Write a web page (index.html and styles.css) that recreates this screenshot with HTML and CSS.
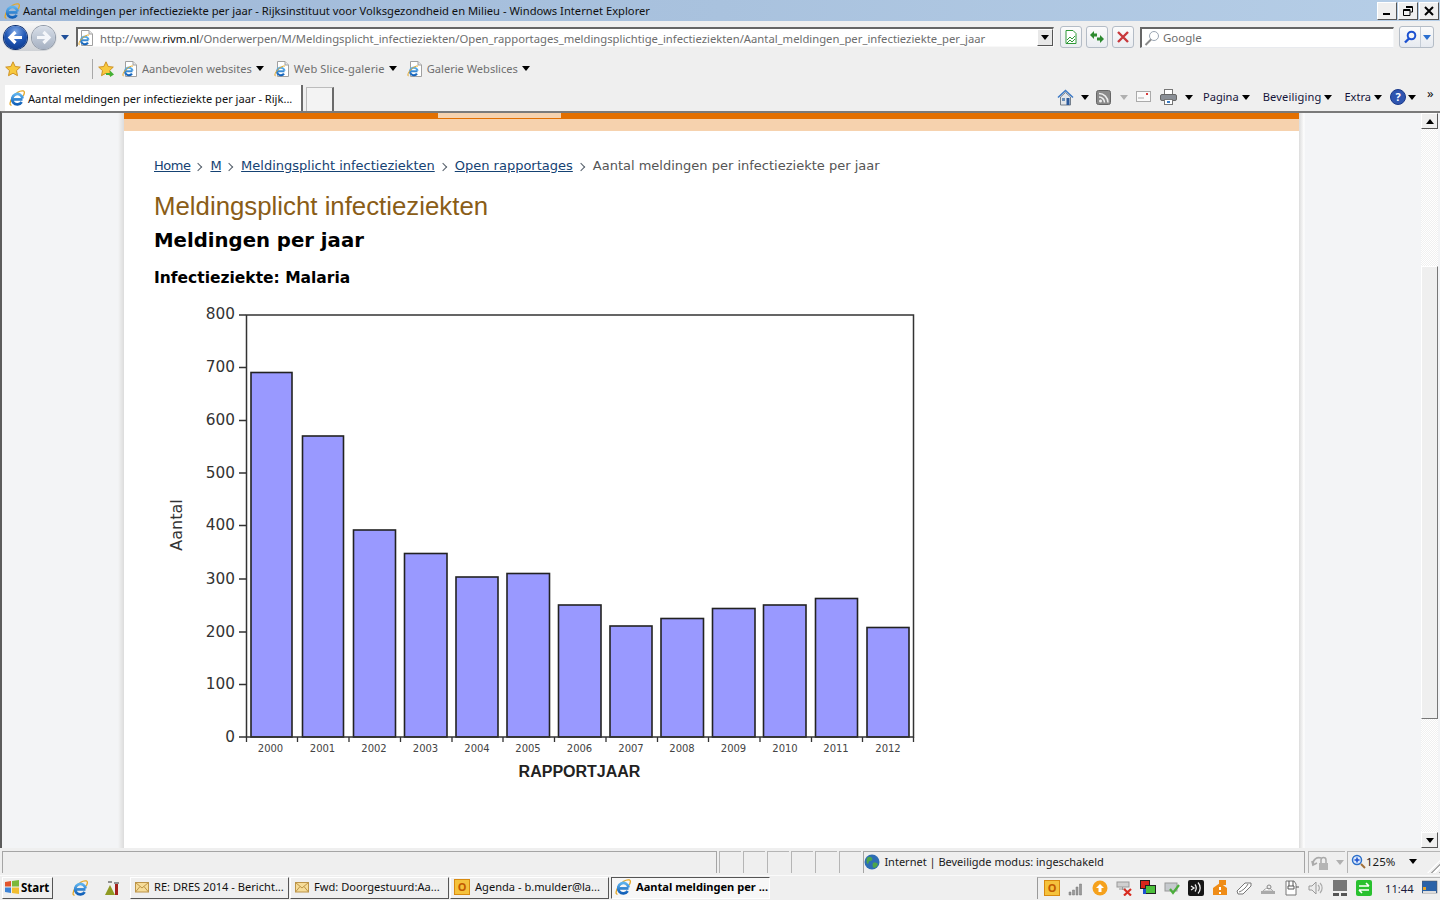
FILE: index.html
```html
<!DOCTYPE html>
<html lang="nl">
<head>
<meta charset="utf-8">
<title>Aantal meldingen per infectieziekte per jaar</title>
<link rel="stylesheet" href="styles.css">
</head>
<body>
<svg class="defs" width="0" height="0" aria-hidden="true">
  <defs>
    <linearGradient id="ieblue" x1="0" y1="0" x2="0" y2="1"><stop offset="0" stop-color="#5db2ee"/><stop offset="1" stop-color="#1260b8"/></linearGradient>
    <radialGradient id="backg" cx=".5" cy=".25" r=".8"><stop offset="0" stop-color="#7fa9e6"/><stop offset=".55" stop-color="#1f56b4"/><stop offset="1" stop-color="#0e3a8c"/></radialGradient>
  </defs>
  <symbol id="ie" viewBox="0 0 16 16">
    <path d="M2.600 15C.2 15.800.6 11.500 4 7S11.500.400 14.300.900c1.700.5 1.200 3-.3 5.300" fill="none" stroke="#e5a828" stroke-width="1.300"/>
    <path d="M4 9.300h9.500M12.700 12A5.200 5.200 0 1 1 13.500 8.500" fill="none" stroke="url(#ieblue)" stroke-width="2.700"/>
  </symbol>
  <symbol id="pageie" viewBox="0 0 16 16">
    <path d="M3.500.5h7.500l3.500 3.500v11.500h-11z" fill="#fff" stroke="#a0a0a0"/>
    <path d="M11 .5v3.500h3.500" fill="#e8e8e8" stroke="#a0a0a0"/>
    <path d="M3.500 10.300h7M10 12.600A3.800 3.800 0 1 1 10.600 9.800" fill="none" stroke="url(#ieblue)" stroke-width="2.100"/>
    <path d="M1.500 15C.2 15 1 11.500 3.500 9S9 4.500 11 5" fill="none" stroke="#e5a828" stroke-width="1"/>
  </symbol>
  <symbol id="star" viewBox="0 0 16 16">
    <path d="M8 .8l2.200 4.700 5.100.6-3.800 3.500 1 5.100L8 12.200l-4.500 2.500 1-5.100L.7 6.100l5.100-.6z" fill="#f8c93e" stroke="#c98a1a" stroke-width=".9"/>
  </symbol>
  <symbol id="env" viewBox="0 0 14 12">
    <rect x=".5" y="1.500" width="13" height="9.500" fill="#f6dc98" stroke="#bc9448"/>
    <path d="M.5 1.500L7 7l6.500-5.500M.5 11L5 5.500M13.500 11L9 5.500" fill="none" stroke="#bc9448"/>
  </symbol>
</svg>

<header class="titlebar">
  <svg class="i16"><use href="#ie"/></svg>
  <span class="title-text">Aantal meldingen per infectieziekte per jaar - Rijksinstituut voor Volksgezondheid en Milieu - Windows Internet Explorer</span>
  <div class="winbtns">
    <button class="winbtn"><svg width="12" height="12"><rect x="2" y="8" width="7" height="2" fill="#000"/></svg></button>
    <button class="winbtn"><svg width="12" height="12"><path d="M4 1.500h6.500v5.500h-2M1.500 4.500h6.500v6h-6.500zM1.500 5.500h6.500M4 2.500h6.500" fill="none" stroke="#000"/></svg></button>
    <button class="winbtn"><svg width="12" height="12"><path d="M2 2l8 8M10 2l-8 8" fill="none" stroke="#000" stroke-width="2"/></svg></button>
  </div>
</header>

<div class="addrrow">
  <div class="navpill">
    <span class="navbtn back"><svg width="23" height="23"><circle cx="11.500" cy="11.500" r="11.500" fill="url(#backg)"/><path d="M18 11.500H7M11.500 6l-5.500 5.500 5.500 5.500" fill="none" stroke="#fff" stroke-width="3.200"/></svg></span>
    <span class="navbtn fwd"><svg width="23" height="23"><path d="M5 11.500h11M11.500 6l5.500 5.500-5.500 5.500" fill="none" stroke="#f4f6fa" stroke-width="3.200"/></svg></span>
  </div>
  <span class="tri navdrop"></span>
  <div class="addr">
    <svg class="i16"><use href="#pageie"/></svg>
    <span class="url">http://www.<b>rivm.nl</b>/Onderwerpen/M/Meldingsplicht_infectieziekten/Open_rapportages_meldingsplichtige_infectieziekten/Aantal_meldingen_per_infectieziekte_per_jaar</span>
    <span class="combo"><span class="tri black"></span></span>
  </div>
  <span class="tbtn first"><svg width="16" height="16"><path d="M3 1.500h7l3 3v10H3z" fill="#fff" stroke="#2f9a38"/><path d="M4 11l3-3 2 2 3-3M4 14l3-3 2 2 3-3" fill="none" stroke="#2f9a38"/></svg></span>
  <span class="tbtn"><svg width="16" height="16"><path d="M1 6l4-4v2.500h3v3H5V10zM15 10l-4 4v-2.500H8v-3h3V6z" fill="#2d8a2f"/></svg></span>
  <span class="tbtn"><svg width="16" height="16"><path d="M3 3l10 10M13 3L3 13" stroke="#c8383c" stroke-width="2.400"/></svg></span>
  <div class="search">
    <svg class="i16"><circle cx="10" cy="6" r="4.500" fill="#fff" stroke="#9aa5b2"/><path d="M7 9.500L1.500 15" stroke="#8a8a8a" stroke-width="2"/></svg>
    <span>Google</span>
  </div>
  <div class="searchbtn">
    <span class="sgo"><svg width="14" height="14"><circle cx="8.500" cy="5.500" r="3.800" fill="none" stroke="#1b50d0" stroke-width="2"/><path d="M6 8.500L2 12.500" stroke="#1b50d0" stroke-width="2.400"/></svg></span>
    <span class="sdrop"><span class="tri blue"></span></span>
  </div>
</div>

<div class="favrow">
  <svg class="i16 fav-star"><use href="#star"/></svg>
  <span class="fav-label">Favorieten</span>
  <span class="fav-sep"></span>
  <svg class="i16 fav-add"><use href="#star"/><path d="M8 12h4V9.500l4 4-4 2.500v-2H8z" fill="#45b035"/></svg>
  <span class="favlink l1"><svg class="i16"><use href="#pageie"/></svg>Aanbevolen websites<span class="tri black"></span></span>
  <span class="favlink l2"><svg class="i16"><use href="#pageie"/></svg>Web Slice-galerie<span class="tri black"></span></span>
  <span class="favlink l3"><svg class="i16"><use href="#pageie"/></svg>Galerie Webslices<span class="tri black"></span></span>
</div>

<div class="tabrow">
  <div class="tab"><svg class="i16"><use href="#ie"/></svg><span>Aantal meldingen per infectieziekte per jaar - Rijk...</span></div>
  <div class="newtab"></div>
  <div class="tools">
    <svg class="t-home-i" width="17" height="17"><path d="M1 8.500L8.500 1.500 16 8.500" fill="none" stroke="#3d7ac6" stroke-width="1.600"/><path d="M3.500 8v8h10V8L8.500 3.500z" fill="#e3e6ea" stroke="#76808c"/><rect x="9.500" y="9" width="3" height="7" fill="#2c5a9c"/><rect x="5" y="9" width="3" height="3" fill="#6b8fb8"/></svg>
    <span class="tri black t-home"></span>
    <svg class="t-rss-i" width="15" height="15"><rect x=".5" y=".5" width="14" height="14" rx="2" fill="#8a8a8a" stroke="#666"/><circle cx="4.500" cy="11" r="1.500" fill="#eee"/><path d="M3 7a5.500 5.500 0 0 1 5.500 5.500M3 3.500a9 9 0 0 1 9 9" fill="none" stroke="#eee" stroke-width="1.500"/></svg>
    <span class="tri grey t-rss"></span>
    <svg class="t-mail" width="15" height="12"><rect x=".5" y=".5" width="14" height="10" fill="#fafafa" stroke="#aaa"/><path d="M2 7h6" stroke="#aaa"/><rect x="10" y="2" width="2" height="2" fill="#d83a3a"/></svg>
    <svg class="t-print" width="17" height="16"><rect x="4.500" y=".5" width="8" height="6" fill="#fff" stroke="#777"/><rect x=".5" y="5.500" width="16" height="6" rx="1.500" fill="#8a8f96" stroke="#666"/><rect x="4.500" y="10.500" width="8" height="5" fill="#fff" stroke="#777"/><rect x="7" y="12" width="3" height="2" fill="#3b7cc4"/></svg>
    <span class="tri black t-pr"></span>
    <span class="tool-txt pagina">Pagina<span class="tri black"></span></span>
    <span class="tool-txt beveil">Beveiliging<span class="tri black"></span></span>
    <span class="tool-txt extra">Extra<span class="tri black"></span></span>
    <span class="help">?</span><span class="tri black t-help"></span>
    <span class="chev">»</span>
  </div>
</div>

<main class="viewport">
  <div class="gutter left"></div>
  <article class="sheet">
    <div class="band"><span class="band-on"></span></div>
    <div class="band2"></div>
    <div class="content">
      <nav class="crumbs">
        <a class="short">Home</a><span class="sep"></span><a class="short">M</a><span class="sep"></span><a>Meldingsplicht infectieziekten</a><span class="sep"></span><a>Open rapportages</a><span class="sep"></span><span>Aantal meldingen per infectieziekte per jaar</span>
      </nav>
      <h1>Meldingsplicht infectieziekten</h1>
      <h2>Meldingen per jaar</h2>
      <h3>Infectieziekte: Malaria</h3>
      <svg class="chart" width="780" height="500" viewBox="154 296 780 500">
        <g class="bars">
          <rect x="251" y="372.500" width="41" height="364.500"/>
          <rect x="302.500" y="436" width="41" height="301"/>
          <rect x="353.500" y="530" width="42" height="207"/>
          <rect x="404.500" y="553.500" width="42.500" height="183.500"/>
          <rect x="456" y="577" width="42" height="160"/>
          <rect x="507" y="573.500" width="42.500" height="163.500"/>
          <rect x="558.500" y="605" width="42.500" height="132"/>
          <rect x="610" y="626" width="42" height="111"/>
          <rect x="661" y="618.500" width="42.500" height="118.500"/>
          <rect x="712.500" y="608.500" width="42.500" height="128.500"/>
          <rect x="763.500" y="605" width="42.500" height="132"/>
          <rect x="815.500" y="598.500" width="42" height="138.500"/>
          <rect x="867" y="627.500" width="42" height="109.500"/>
        </g>
        <rect class="frame" x="246.500" y="315" width="667" height="422"/>
        <path class="ticks" d="M239 315h7M239 367.500h7M239 420.500h7M239 473h7M239 525.500h7M239 579h7M239 632h7M239 684.500h7M239 737h7M246.500 737v5M297.500 737v5M349 737v5M400.500 737v5M452 737v5M503 737v5M554.500 737v5M606 737v5M657.500 737v5M708.500 737v5M760 737v5M811.500 737v5M862.500 737v5M913.500 737v5"/>
        <g class="ylab">
          <text x="235" y="319">800</text><text x="235" y="372">700</text><text x="235" y="425">600</text><text x="235" y="478">500</text><text x="235" y="530">400</text><text x="235" y="584">300</text><text x="235" y="637">200</text><text x="235" y="689">100</text><text x="235" y="742">0</text>
        </g>
        <g class="xlab">
          <text x="270.500" y="752">2000</text><text x="322.500" y="752">2001</text><text x="374" y="752">2002</text><text x="425.500" y="752">2003</text><text x="477" y="752">2004</text><text x="528" y="752">2005</text><text x="579.500" y="752">2006</text><text x="631" y="752">2007</text><text x="682" y="752">2008</text><text x="733.500" y="752">2009</text><text x="785" y="752">2010</text><text x="836" y="752">2011</text><text x="888" y="752">2012</text>
        </g>
        <text class="xtitle" x="579.500" y="777">RAPPORTJAAR</text>
        <text class="ytitle" transform="translate(182 525) rotate(-90)">Aantal</text>
      </svg>
    </div>
  </article>
  <div class="gutter right"></div>
  <div class="scrollbar">
    <span class="sb-btn"><span class="tri up"></span></span>
    <span class="sb-track top"></span>
    <span class="sb-thumb"></span>
    <span class="sb-track bottom"></span>
    <span class="sb-btn"><span class="tri black"></span></span>
  </div>
</main>

<footer class="statusbar">
  <div class="st-main"></div>
  <span class="st-cell"></span><span class="st-cell"></span><span class="st-cell"></span><span class="st-cell"></span><span class="st-cell"></span><span class="st-cell"></span>
  <div class="st-zone">
    <svg class="i16"><circle cx="8" cy="8" r="7.500" fill="#2d6db5"/><path d="M3 4c2-2 4-1 5 0s0 3-2 3-1 3-2 3-2-3-1-6zM9 9c2-1 4 0 5 1-1 3-3 4-4 4s-2-3-1-5z" fill="#4da64a"/></svg>
    <span>Internet | Beveiligde modus: ingeschakeld</span>
  </div>
  <div class="st-lock">
    <svg width="24" height="16"><path d="M2 9a6 6 0 0 1 8-6M1 6l1 4 4-2" fill="none" stroke="#aaa" stroke-width="1.800"/><rect x="8" y="8" width="9" height="7" fill="#b5b5b5"/><path d="M10 8V5a2.500 2.500 0 0 1 5 0v3" fill="none" stroke="#aaa" stroke-width="1.500"/></svg>
    <span class="tri grey"></span>
  </div>
  <div class="st-zoom">
    <svg width="15" height="15"><circle cx="6" cy="6" r="4.500" fill="#dbe9fb" stroke="#2c6fc9" stroke-width="1.500"/><path d="M3.500 6h5M6 3.500v5" stroke="#1b50d0" stroke-width="1.500"/><path d="M10 10l4 4" stroke="#a0703a" stroke-width="2"/></svg>
    <span>125%</span>
    <span class="tri black"></span>
  </div>
  <span class="grip"></span>
</footer>

<nav class="taskbar">
  <button class="start">
    <svg width="16" height="14"><path d="M1 2l6-1v5.500H1z" fill="#e2552d"/><path d="M8 1l7-1v6.500H8z" fill="#7cb83a"/><path d="M1 7.500h6V13l-6-1z" fill="#3d83d6"/><path d="M8 7.500h7V14l-7-1z" fill="#f0bd30"/></svg>
    <span>Start</span>
  </button>
  <svg class="i16 q-ie"><use href="#ie"/></svg>
  <svg class="i16 q-app"><path d="M1 15L6 5l5 10z" fill="#8f9a22"/><path d="M4 2h4" stroke="#333"/><rect x="11" y="4" width="3" height="11" fill="#a4221f"/><path d="M10 3h5" stroke="#333"/></svg>
  <button class="task first"><svg class="env"><use href="#env"/></svg><span>RE: DRES 2014 - Bericht...</span></button>
  <button class="task"><svg class="env"><use href="#env"/></svg><span>Fwd: Doorgestuurd:Aa...</span></button>
  <button class="task"><span class="outlook">O</span><span>Agenda - b.mulder@la...</span></button>
  <button class="task active"><svg class="i16"><use href="#ie"/></svg><span>Aantal meldingen per ...</span></button>
  <div class="tray">
    <span class="outlook">O</span>
    <svg><path d="M1 15v-3h2v3zM4.500 15v-5h2v5zM8 15V7h2v8zM11.500 15V4h2v11z" fill="#9a9a9a" stroke="#777" stroke-width=".5"/></svg>
    <svg><circle cx="8" cy="8" r="7.500" fill="#f5a11c"/><path d="M8 12V7" stroke="#fff" stroke-width="3"/><path d="M4 8l4-4 4 4z" fill="#fff"/></svg>
    <svg><rect x="1" y="2" width="12" height="5" fill="#d0d0d0" stroke="#999"/><path d="M3 9h7M6.500 7v3" stroke="#999"/><path d="M8 9l7 6.500M15 9l-7 6.500" stroke="#d82c20" stroke-width="2.200"/></svg>
    <svg><rect x=".5" y=".5" width="9" height="8" fill="#d8261c" stroke="#222"/><rect x="5.500" y="5.500" width="10" height="8" fill="#4cc03c" stroke="#222"/><rect x="3" y="9" width="3" height="5" fill="#1b50d0"/></svg>
    <svg><rect x="1" y="3" width="12" height="8" fill="#c6cace" stroke="#999"/><path d="M6 9l3 4 6-8" fill="none" stroke="#4cae3c" stroke-width="2.200"/></svg>
    <svg><rect width="16" height="16" rx="2" fill="#151515"/><path d="M3 6l3 2-3 2M7 4.500a6 6 0 0 1 0 7M10 2.500a8 8 0 0 1 0 11" fill="none" stroke="#eee" stroke-width="1.300"/></svg>
    <svg><path d="M1 15V8l7-5 7 5v7z" fill="#ef8c16"/><rect x="7" y="0" width="7" height="5" fill="#ef8c16"/><rect x="7" y="7" width="2" height="3" fill="#fff"/><rect x="7" y="12" width="2" height="2" fill="#fff"/></svg>
    <svg><path d="M1 11L9 3h6v3l-8 8H2z" fill="#fff" stroke="#777"/><path d="M3 12c3-1 7-4 9-8" fill="none" stroke="#777"/></svg>
    <svg><path d="M3 11a6 6 0 0 1 10 0z" fill="#fff" stroke="#aaa"/><circle cx="9" cy="7" r="2" fill="none" stroke="#888"/><rect x="1" y="11" width="14" height="3" fill="#aaa"/></svg>
    <svg><path d="M2 1h8l2 3v11H2z" fill="#fff" stroke="#777"/><path d="M5 1v5M9 1v5M4 6h6v3H4z" fill="none" stroke="#555"/><path d="M12 7h3" stroke="#555"/></svg>
    <svg><path d="M1 6h3l4-4v12l-4-4H1z" fill="#ececec" stroke="#999"/><path d="M10 5a4 4 0 0 1 0 6M12 3a7 7 0 0 1 0 10" fill="none" stroke="#aaa" stroke-width="1.200"/></svg>
    <svg><rect x="1" y="0" width="14" height="11" fill="#777"/><rect x="1" y="13" width="6" height="3" fill="#555"/><rect x="9" y="13" width="6" height="3" fill="#555"/></svg>
    <svg><rect width="16" height="16" rx="2" fill="#29c12f"/><path d="M3 6h10M10 3l3 3M13 10H3M6 13l-3-3" fill="none" stroke="#fff" stroke-width="1.600"/></svg>
    <span class="clock">11:44</span>
    <svg><rect y="1" width="15" height="12" fill="#2a62a8" stroke="#555" stroke-width=".5"/><rect x="1" y="11" width="13" height="2" fill="#ddd"/><rect x="1" y="7" width="3" height="3" fill="#e6a52a"/></svg>
  </div>
</nav>
</body>
</html>
```

FILE: styles.css
```css
* { box-sizing: border-box; }
html, body { margin: 0; height: 900px; overflow: hidden; }
body { width: 1440px; background: #efefef; font: 11.1px "Noto Sans", "Open Sans", sans-serif; color: #1a1a1a; display: flex; flex-direction: column; }
.defs { position: absolute; }
svg { display: block; flex: none; }
.i16 { width: 16px; height: 16px; }
button { font: inherit; padding: 0; }

.tri { display: inline-block; width: 0; height: 0; border-left: 4.5px solid transparent; border-right: 4.5px solid transparent; border-top: 5px solid #000; flex: none; }
.tri.grey { border-top-color: #b0b0b0; }
.tri.blue { border-top-color: #2b6fd0; }
.tri.up { border-top: 0; border-bottom: 5px solid #000; }

/* title bar */
.titlebar { height: 21px; flex: none; display: flex; align-items: center; padding-left: 4px; gap: 3px; background: linear-gradient(90deg, #a0b9d8, #a9c2de 50%, #b6cee7); color: #101010; font-size: 11.2px; }
.title-text { white-space: nowrap; }
.winbtns { margin-left: auto; display: flex; gap: 1px; margin-right: 1px; }
.winbtn { width: 20px; height: 18px; background: #efefef; border: 1px solid; border-color: #fff #555 #555 #fff; display: flex; align-items: center; justify-content: center; }

/* address row */
.addrrow { height: 32px; flex: none; display: flex; align-items: center; padding-left: 2px; }
.navpill { width: 55px; height: 28px; border-radius: 14px; background: linear-gradient(#f7f7f7, #cfd2d6); display: flex; align-items: center; padding-left: 2px; gap: 5px; }
.navbtn { width: 23px; height: 23px; border-radius: 50%; display: block; }
.back { box-shadow: 0 0 0 1px #0d2f70; }
.fwd { background: linear-gradient(#d8dfe9, #a6b1c2); box-shadow: 0 0 0 1px #909aa8; }
.navdrop { margin-left: 4px; border-top-color: #1f4f99; }
.addr { margin-left: 7px; width: 978px; height: 20px; background: #fff; border: 1px solid; border-color: #666 #f8f8f8 #f8f8f8 #666; border-width: 2px 1px 1px 2px; display: flex; align-items: center; overflow: hidden; }
.url { margin-left: 6px; color: #6d6d6d; font-size: 11.28px; white-space: nowrap; width: 937px; overflow: hidden; position: relative; top: 1px; }
.url b { font-weight: 400; color: #111; }
.combo { margin-left: auto; width: 16px; height: 17px; background: #e8e8e8; border: 1px solid; border-color: #fff #555 #555 #fff; display: flex; align-items: center; justify-content: center; flex: none; }
.tbtn { width: 22px; height: 22px; margin-left: 4px; border: 1px solid #b4bcc6; border-radius: 3px; background: linear-gradient(#fbfbfb, #eaedf1); display: flex; align-items: center; justify-content: center; flex: none; }
.tbtn.first { margin-left: 6px; }
.search { margin-left: 6px; width: 254px; height: 21px; background: #fff; border: 1px solid; border-color: #666 #f4f6f8 #e8eaee #666; border-width: 2px 1px 1px 2px; display: flex; align-items: center; gap: 3px; padding-left: 2px; color: #6d6d6d; font-size: 11.5px; }
.searchbtn { margin-left: 5px; width: 35px; height: 22px; display: flex; border: 1px solid #b4bcc6; border-radius: 3px; background: linear-gradient(#fbfbfb, #e6eaf0); flex: none; }
.sgo { width: 21px; display: flex; align-items: center; justify-content: center; border-right: 1px solid #c4ccd6; }
.sdrop { flex: 1; display: flex; align-items: center; justify-content: center; }

/* favourites row */
.favrow { height: 32px; flex: none; display: flex; align-items: center; padding: 0 0 2px 5px; color: #6f6f6f; }
.favrow svg { margin-top: 2px; }
.fav-label { margin-left: 4px; color: #111; width: 67px; }
.fav-sep { width: 1px; height: 20px; background: #a8a8a8; margin-top: 2px; }
.fav-add { margin-left: 5px; }
.favlink { display: flex; align-items: center; gap: 4px; white-space: nowrap; }
.favlink.l1 { margin-left: 8px; }
.favlink.l2 { margin-left: 10px; letter-spacing: .12px; }
.favlink.l3 { margin-left: 10px; }

/* tab row */
.tabrow { height: 26px; flex: none; display: flex; padding-left: 5px; }
.tab { width: 298px; background: #fff; border-right: 2px solid #6a6a6a; display: flex; align-items: center; gap: 3px; padding-left: 4px; color: #111; white-space: nowrap; overflow: hidden; }
.newtab { width: 28px; margin-left: 3px; margin-top: 2px; border: 1px solid #bcbcbc; border-right: 2px solid #6a6a6a; border-bottom: 0; background: #f3f3f3; }
.tools { margin-left: auto; display: flex; align-items: center; width: 383px; padding-bottom: 2px; color: #14143a; }
.tool-txt { display: flex; align-items: center; gap: 3px; white-space: nowrap; padding-bottom: 2px; }
.tool-txt .tri { margin-top: 2px; }
.t-home { margin-left: 7px; }
.t-rss-i { margin-left: 7px; }
.t-rss { margin-left: 9px; }
.t-mail { margin-left: 8px; }
.t-print { margin-left: 9px; }
.t-pr { margin-left: 8px; }
.pagina { margin-left: 10px; }
.beveil { margin-left: 13px; letter-spacing: .15px; }
.extra { margin-left: 12px; }
.help { margin-left: 8px; width: 16px; height: 16px; border-radius: 50%; background: #2f55b0; border: 1px solid #1b3a8a; color: #fff; font-weight: 700; font-size: 11px; line-height: 14px; text-align: center; flex: none; }
.t-help { margin-left: 2px; }
.chev { margin-left: 11px; margin-top: -8px; font-size: 13px; color: #111; }

/* page viewport */
.viewport { height: 737px; flex: none; display: flex; border-top: 2px solid #7a7a7a; border-left: 2px solid #5c5c5c; background: #f3f4f6; }
.gutter.left { width: 122px; flex: none; background: linear-gradient(90deg, #f3f4f6 116px, #e8e8e8 119px, #dcdcdc); }
.gutter.right { width: 122px; flex: none; background: linear-gradient(90deg, #dcdcdc, #f6f6f6 4px, #fff 5px, #f3f4f6 6px); }
.sheet { width: 1175px; flex: none; background: #fff; overflow: hidden; }
.band { height: 6px; background: #e36f00; padding-left: 314px; }
.band-on { display: block; width: 123px; height: 5px; background: #f6d2ae; }
.band2 { height: 12px; background: #f6d2ae; }
.content { padding: 26px 30px 0; font-family: "DejaVu Sans", Verdana, sans-serif; }
.crumbs { display: flex; align-items: center; font-size: 13px; line-height: 17px; color: #555; white-space: nowrap; }
.crumbs a { color: #154273; text-decoration: underline; }
.crumbs a.short { letter-spacing: -.5px; }
.sep { width: 6px; height: 6px; border-top: 1.5px solid #555f6b; border-right: 1.5px solid #555f6b; transform: rotate(45deg); margin: 2px 9px 0 5px; flex: none; }
h1 { margin: 15px 0 0; font: 400 25.8px/34px "Liberation Sans", Arial, sans-serif; color: #8a5d17; }
h2 { margin: 4px 0 0; font-size: 19.7px; line-height: 27px; font-weight: 700; color: #000; }
h3 { margin: 12px 0 0; font-size: 15.5px; line-height: 24px; font-weight: 700; color: #000; }
.chart { margin-top: 6px; }
.bars rect { fill: #9999ff; stroke: #222; stroke-width: 1.600; }
.frame { fill: none; stroke: #333; stroke-width: 1.500; }
.ticks { fill: none; stroke: #333; stroke-width: 1.300; }
.ylab text { font: 15.300px "DejaVu Sans", sans-serif; fill: #333; text-anchor: end; }
.xlab text { font: 10px "DejaVu Sans", sans-serif; fill: #444; text-anchor: middle; }
.xtitle { font: 700 16px "Liberation Sans", Arial, sans-serif; fill: #222; text-anchor: middle; }
.ytitle { font: 16px "DejaVu Sans", sans-serif; fill: #333; text-anchor: middle; }

/* scrollbar */
.scrollbar { width: 17px; flex: none; display: flex; flex-direction: column; background: #fff; }
.sb-btn { height: 16px; flex: none; background: #efefef; border: 1px solid; border-color: #fff #555 #555 #fff; display: flex; align-items: center; justify-content: center; }
.sb-track { background: repeating-conic-gradient(#f0f0f0 0 25%, #fff 0 50%) 0 0 / 2px 2px; }
.sb-track.top { height: 137px; flex: none; }
.sb-track.bottom { flex: 1; }
.sb-thumb { height: 453px; flex: none; background: #efefef; border: 1px solid; border-color: #fff #777 #777 #fff; }

/* status bar */
.statusbar { height: 27px; flex: none; display: flex; align-items: stretch; padding: 3px 0 2px; position: relative; }
.st-main { width: 716px; margin-left: 2px; border-top: 1px solid #a5a5a5; border-left: 1px solid #a5a5a5; border-right: 1px solid #a5a5a5; }
.st-cell { width: 22px; margin-left: 2px; border-top: 1px solid #b5b5b5; border-left: 1px solid #b5b5b5; }
.st-zone { width: 442px; margin-left: 2px; border-top: 1px solid #a5a5a5; border-left: 1px solid #a5a5a5; border-right: 1px solid #a5a5a5; display: flex; align-items: center; gap: 4px; padding-bottom: 2px; color: #1a1a1a; font-size: 11px; }
.st-lock { width: 37px; margin-left: 3px; border-top: 1px solid #b5b5b5; border-left: 1px solid #b5b5b5; display: flex; align-items: center; gap: 1px; padding-left: 2px; }
.st-zoom { width: 93px; margin-left: 2px; border-top: 1px solid #b5b5b5; border-left: 1px solid #b5b5b5; display: flex; align-items: center; padding: 0 0 2px 3px; color: #1a1a1a; font-size: 11.5px; }
.st-zoom .tri { margin-left: 14px; }
.grip { position: absolute; right: 0; bottom: 2px; width: 13px; height: 13px; background: repeating-linear-gradient(135deg, transparent 0 2px, #a8a8a8 2px 3px, #fff 3px 5px); clip-path: polygon(100% 0, 100% 100%, 0 100%); }

/* taskbar */
.taskbar { height: 24px; flex: none; display: flex; align-items: center; padding-left: 2px; border-top: 1px solid #fafafa; }
.start { width: 51px; height: 22px; display: flex; align-items: center; gap: 1px; padding: 0 0 1px 1px; background: #efefef; border: 1px solid; border-color: #fff #555 #555 #fff; font-weight: 700; color: #000; font-size: 11.5px; }
.q-ie { margin-left: 19px; }
.q-app { margin-left: 16px; }
.task { width: 159px; height: 22px; margin-left: 1px; display: flex; align-items: center; gap: 5px; padding: 0 0 2px 3px; background: #efefef; border: 1px solid; border-color: #fff #555 #555 #fff; color: #111; white-space: nowrap; overflow: hidden; text-align: left; }
.task.first { margin-left: 10px; }
.task.active { margin-left: 2px; border-color: #555 #fff #fff #555; font-weight: 700; color: #000; gap: 5px; background: #f7f7f7; }
.env { width: 14px; height: 12px; margin-left: 1px; }
.outlook { width: 16px; height: 16px; flex: none; background: #f5c23c; border: 1px solid #d88a10; color: #c25a00; font-weight: 700; font-size: 11px; line-height: 14px; text-align: center; }
.tray { margin-left: auto; width: 403px; height: 22px; display: flex; align-items: center; gap: 8px; padding-left: 6px; border-left: 1px solid #9a9a9a; border-top: 1px solid #b5b5b5; }
.tray svg { width: 16px; height: 16px; }
.clock { margin-left: 5px; color: #1a1a3a; font-size: 11.2px; }
```
